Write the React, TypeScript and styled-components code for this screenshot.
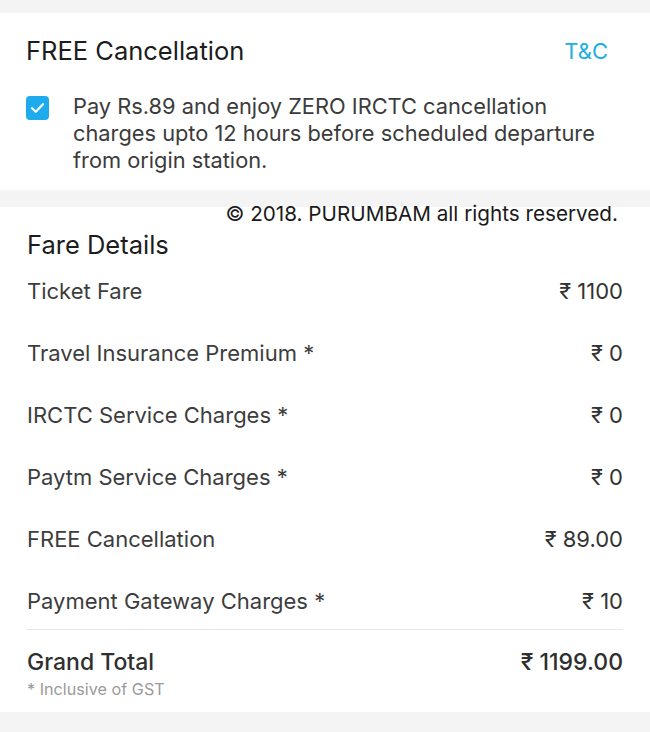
import React from 'react';
import styled, { createGlobalStyle } from 'styled-components';

const GlobalStyle = createGlobalStyle`
  html, body {
    margin: 0;
    padding: 0;
    background: #f4f4f4;
  }
  body {
    font-family: Inter, 'Noto Sans', 'DejaVu Sans', sans-serif;
    -webkit-font-smoothing: antialiased;
  }
`;

const Page = styled.div`
  width: 650px;
  padding-top: 13px;
  display: flex;
  flex-direction: column;
  gap: 17px;
`;

const Card = styled.section`
  background: #ffffff;
  display: flex;
  flex-direction: column;
`;

const CancelCard = styled(Card)`
  padding: 23px 42px 16px 26px;
  gap: 27px;
`;

const HeaderRow = styled.div`
  display: flex;
  align-items: center;
  justify-content: space-between;
`;

const Title = styled.h2`
  margin: 0;
  font-size: 25.5px;
  line-height: 30px;
  font-weight: 400;
  color: #1c1c1c;
`;

const Link = styled.a`
  font-size: 22px;
  color: #21aee2;
  text-decoration: none;
  cursor: pointer;
`;

const CheckRow = styled.label`
  display: flex;
  align-items: flex-start;
  gap: 24px;
`;

const CheckBox = styled.span`
  flex: none;
  width: 23px;
  height: 24px;
  margin-top: 3px;
  border-radius: 4px;
  background: #1eabee;
  display: flex;
  align-items: center;
  justify-content: center;
`;

const CheckText = styled.p`
  margin: 0;
  font-size: 21.8px;
  line-height: 27px;
  color: #3b3b3b;
`;

const FareCard = styled(Card)`
  padding: 0 27px 12px 27px;
`;

const Copyright = styled.div`
  align-self: flex-end;
  margin-top: -4px;
  margin-right: 5px;
  font-size: 20.7px;
  line-height: 22px;
  color: #1a1a1a;
`;

const FareTitle = styled(Title)`
  margin-top: 5px;
`;

const FareRow = styled.div`
  display: flex;
  align-items: center;
  justify-content: space-between;
  height: 62px;
  font-size: 22px;
  color: #3d3d3d;
`;

const Amount = styled.span`
  color: #333333;
`;

const Divider = styled.hr`
  margin: -3px 0 0 0;
  border: none;
  border-top: 1px solid #e6e6e6;
`;

const TotalRow = styled(FareRow)`
  height: 32px;
  margin-top: 16px;
  font-size: 23px;
  font-weight: 500;
  color: #2f2f2f;
`;

const Note = styled.div`
  font-size: 16.2px;
  line-height: 22px;
  color: #9a9a9a;
`;

const fares = [
  { label: 'Ticket Fare', amount: '₹ 1100' },
  { label: 'Travel Insurance Premium *', amount: '₹ 0' },
  { label: 'IRCTC Service Charges *', amount: '₹ 0' },
  { label: 'Paytm Service Charges *', amount: '₹ 0' },
  { label: 'FREE Cancellation', amount: '₹ 89.00' },
  { label: 'Payment Gateway Charges *', amount: '₹ 10' },
];

const Check = () => (
  <svg width='15' height='12' viewBox='0 0 15 12' fill='none'>
    <path d='M2 6.2 L5.8 9.8 L13 2.2' stroke='#ffffff' strokeWidth='2.2' strokeLinecap='round' strokeLinejoin='round' />
  </svg>
);

const App: React.FC = () => (
  <>
    <GlobalStyle />
    <Page>
      <CancelCard>
        <HeaderRow>
          <Title>FREE Cancellation</Title>
          <Link>T&amp;C</Link>
        </HeaderRow>
        <CheckRow>
          <CheckBox>
            <Check />
          </CheckBox>
          <CheckText>
            Pay Rs.89 and enjoy ZERO IRCTC cancellation charges upto 12 hours before scheduled departure from
            origin station.
          </CheckText>
        </CheckRow>
      </CancelCard>

      <FareCard>
        <Copyright>© 2018. PURUMBAM all rights reserved.</Copyright>
        <FareTitle>Fare Details</FareTitle>
        {fares.map((f) => (
          <FareRow key={f.label}>
            <span>{f.label}</span>
            <Amount>{f.amount}</Amount>
          </FareRow>
        ))}
        <Divider />
        <TotalRow>
          <span>Grand Total</span>
          <span>₹ 1199.00</span>
        </TotalRow>
        <Note>* Inclusive of GST</Note>
      </FareCard>
    </Page>
  </>
);

export default App;
